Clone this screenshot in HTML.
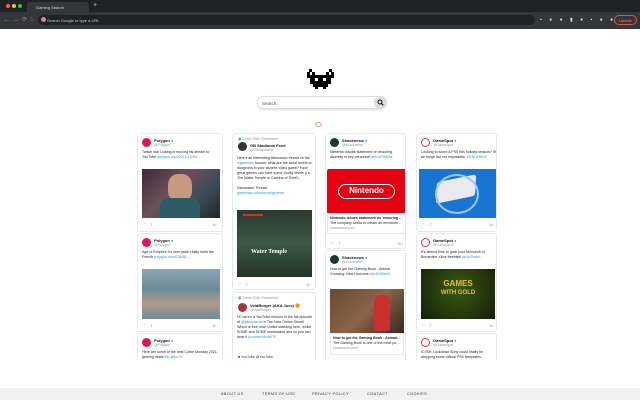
<!DOCTYPE html>
<html><head><meta charset="utf-8"><style>
*{margin:0;padding:0;box-sizing:border-box}
body{width:640px;height:400px;overflow:hidden;background:#fff;font-family:"Liberation Sans",sans-serif;position:relative}
.a{position:absolute}
.card{position:absolute;background:#fff;border:1px solid #e6e9ec;border-radius:3px;overflow:hidden}
.nm{font-size:4px;font-weight:bold;color:#111;white-space:nowrap}
.hd{font-size:3.5px;color:#8899a6;white-space:nowrap}
.tx{font-size:3.6px;color:#222;line-height:5px}
.ln{white-space:nowrap;overflow:hidden;text-overflow:ellipsis}
.lk{color:#1b95e0}
.av{position:absolute;width:9px;height:9px;border-radius:50%}
.act{position:absolute;font-size:4px;color:#8899a6;white-space:nowrap}
</style></head><body>
<!-- chrome -->
<div class="a" style="left:0;top:0;width:640px;height:12px;background:#202124"></div>
<div class="a" style="left:6px;top:4px;width:4px;height:4px;border-radius:50%;background:#ff5f57"></div>
<div class="a" style="left:12px;top:4px;width:4px;height:4px;border-radius:50%;background:#febc2e"></div>
<div class="a" style="left:18px;top:4px;width:4px;height:4px;border-radius:50%;background:#28c840"></div>
<div class="a" style="left:27px;top:2px;width:62px;height:10px;background:#35363a;border-radius:3px 3px 0 0;color:#ddd;font-size:4px;padding:3px 0 0 9px">Gaming Search</div>
<div class="a" style="left:93px;top:2px;color:#ccc;font-size:7px">+</div>
<div class="a" style="left:0;top:12px;width:640px;height:17px;background:#35363a"></div>
<div class="a" style="left:4px;top:16px;color:#999;font-size:6px;letter-spacing:3px;white-space:nowrap">←→⟳⌂</div>
<div class="a" style="left:38px;top:15px;width:497px;height:10px;background:#202124;border-radius:5px;color:#ccc;font-size:4px;padding:3px 0 0 9px">Search Google or type a URL</div>
<div class="a" style="left:41px;top:17px;width:5px;height:5px;border-radius:50%;background:#c8a;"></div>
<div class="a" style="left:540px;top:17px;color:#ddd;font-size:5px;letter-spacing:3px;white-space:nowrap">▪ ● ● ▮ ● ▪ ● ●</div>
<div class="a" style="left:614px;top:15px;width:23px;height:10px;border:1px solid #e05050;border-radius:5px;color:#f08080;font-size:4px;padding:2px 0 0 4px;white-space:nowrap">Update ⋮</div>
<!-- logo -->
<svg class="a" style="left:307px;top:69px" width="27" height="20" viewBox="0 0 27 20"><g fill="#000">
<rect x="2" y="0" width="3" height="3"/><rect x="22" y="0" width="3" height="3"/>
<rect x="0" y="3" width="3" height="6"/><rect x="24" y="3" width="3" height="6"/>
<rect x="5" y="3" width="3" height="3"/><rect x="19" y="3" width="3" height="3"/>
<rect x="3" y="6" width="21" height="9"/><rect x="6" y="15" width="15" height="3"/>
<rect x="8" y="18" width="3" height="2"/><rect x="16" y="18" width="3" height="2"/></g>
<rect x="8" y="9" width="3" height="3" fill="#fff"/><rect x="16" y="9" width="3" height="3" fill="#fff"/></svg>
<!-- search -->
<div class="a" style="left:257px;top:96px;width:129px;height:13px;border:1px solid #ddd;border-radius:7px;box-shadow:0 1px 2px #ddd;font-size:4.5px;color:#555;padding:3.5px 0 0 4px">Search..</div>
<div class="a" style="left:374px;top:96px;width:13px;height:13px;border-radius:50%;background:#ddd"></div>
<svg class="a" style="left:377px;top:99px" width="7" height="7" viewBox="0 0 7 7"><circle cx="3" cy="3" r="2" fill="none" stroke="#111" stroke-width="1"/><path d="M4.4 4.4L6.3 6.3" stroke="#111" stroke-width="1.1"/></svg>
<div class="a" style="left:315px;top:122px;width:7px;height:5px;border:1px solid #f0a080;border-radius:50%"></div>

<!-- col1 -->
<div class="card" style="left:137px;top:133px;width:86px;height:99px">
 <div class="av" style="left:4px;top:4px;background:#e0144f"></div>
 <div class="a nm" style="left:16px;top:4px">Polygon <span style="color:#1da1f2">●</span></div><div class="a hd" style="left:16px;top:9px">@Polygon</div>
 <div class="a tx" style="left:4px;top:16px;width:80px">Twitch star Ludwig is moving his stream to YouTube <span class="lk">polygon.com/2021/11/30/...</span></div>
 <div class="a" style="left:4px;top:35px;width:78px;height:49px;background:linear-gradient(135deg,#402838,#6a5058 40%,#3a4a58 70%,#222)"></div>
 <div class="a" style="left:30px;top:40px;width:24px;height:28px;border-radius:40%;background:#c89880"></div>
 <div class="a" style="left:22px;top:64px;width:40px;height:20px;background:#2e5c64;border-radius:8px 8px 0 0"></div>
 <div class="act" style="left:5px;top:88px">♡ &nbsp; ⇪</div><div class="act" style="left:74px;top:88px">1h</div>
</div>
<div class="card" style="left:137px;top:233px;width:86px;height:99px">
 <div class="av" style="left:4px;top:4px;background:#e0144f"></div>
 <div class="a nm" style="left:16px;top:4px">Polygon <span style="color:#1da1f2">●</span></div><div class="a hd" style="left:16px;top:9px">@Polygon</div>
 <div class="a tx" style="left:4px;top:16px;width:80px">Age of Empires 4's new patch really nerfs the French <span class="lk">polygon.com/22806/...</span></div>
 <div class="a" style="left:4px;top:35px;width:78px;height:50px;background:linear-gradient(180deg,#8aa4b4,#6c8c98 40%,#b09a8a 70%,#708a98)"></div>
 <div class="act" style="left:5px;top:89px">♡ &nbsp; ⇪</div><div class="act" style="left:74px;top:89px">1h</div>
</div>
<div class="card" style="left:137px;top:333px;width:86px;height:30px">
 <div class="av" style="left:4px;top:4px;background:#e0144f"></div>
 <div class="a nm" style="left:16px;top:4px">Polygon <span style="color:#1da1f2">●</span></div><div class="a hd" style="left:16px;top:9px">@Polygon</div>
 <div class="a tx" style="left:4px;top:16px;width:80px">Here are some of the best Cyber Monday 2021 gaming deals <span class="lk">trib.al/bc7x</span></div>
</div>
<!-- col2 -->
<div class="card" style="left:232px;top:133px;width:84px;height:157px">
 <div class="a hd" style="left:5px;top:3px"><span style="color:#2a5">▣</span> Quest Sixth Retweeted</div>
 <div class="av" style="left:5px;top:8px;background:#333"></div>
 <div class="a nm" style="left:17px;top:9px">GB Stadiums Feed</div><div class="a hd" style="left:17px;top:14px">@GBStadiums</div>
 <div class="a tx" style="left:4px;top:22px;width:78px">Here's an interesting discussion thread on the <span class="lk">r/gamedev</span> forums: what are the worst levels or dungeons in your favorite video game? Fave great games can have some clunky levels (i.e. The Water Temple in Ocarina of Time!)<br><br>Discussion Thread: <span class="lk">gamefaqs.com/forum/general</span></div>
 <div class="a" style="left:4px;top:76px;width:75px;height:67px;background:linear-gradient(180deg,#2a3a30,#3c5844 50%,#243428)"></div>
 <div class="a" style="left:10px;top:80px;width:20px;height:2px;background:#c33"></div>
 <div class="a" style="left:18px;top:115px;color:#fff;font-family:'Liberation Serif',serif;font-size:6px;font-weight:bold;white-space:nowrap">Water Temple</div>
 <div class="act" style="left:5px;top:148px">♡ &nbsp; ⇪</div><div class="act" style="left:73px;top:148px">1h</div>
</div>
<div class="card" style="left:232px;top:292px;width:84px;height:70px">
 <div class="a hd" style="left:5px;top:3px"><span style="color:#2a5">▣</span> Quest Sixth Retweeted</div>
 <div class="av" style="left:5px;top:10px;background:#a33"></div>
 <div class="a nm" style="left:17px;top:10px">VoidBurger (AKA Joes) 🟠</div><div class="a hd" style="left:17px;top:15px">@VoidBurger</div>
 <div class="a tx" style="left:4px;top:22px;width:78px">Hi, here's a YouTube version of the full episode of <span class="lk">@gamebench</span>'s The New Online Street! Which is free now! Unlike standing here, which SOME and SOME oneheaded and so you can hear it <span class="lk">youtube/cb/dWTF</span></div>
 <div class="a hd" style="left:5px;top:62px;color:#333"><span style="color:#e00">■</span> YouTube @YouTube</div>
</div>
<!-- col3 -->
<div class="card" style="left:325px;top:133px;width:81px;height:116px">
 <div class="av" style="left:4px;top:4px;background:#1a3a2a"></div>
 <div class="a nm" style="left:16px;top:4px">Shacknews <span style="color:#1da1f2">●</span></div><div class="a hd" style="left:16px;top:9px">@shacknews</div>
 <div class="a tx" style="left:4px;top:16px;width:76px">Nintendo issues statement on ensuring diversity in key personnel <span class="lk">shk.tl/3I5KBe</span></div>
 <div class="a" style="left:1px;top:35px;width:79px;height:44px;background:#e60012;border-radius:2px 2px 0 0"></div>
 <div class="a" style="left:12px;top:50px;width:57px;height:15px;border:1.5px solid #fff;border-radius:8px;color:#fff;font-weight:bold;font-size:8px;text-align:center;line-height:12px">Nintendo</div>
 <div class="a" style="left:1px;top:79px;width:79px;height:21px;border:1px solid #e6e9ec;padding:2px"><div class="tx ln" style="font-weight:bold;line-height:5px">Nintendo issues statement on 'ensuring di...</div><div class="tx ln" style="line-height:5px">The company seeks to create an environm...</div><div class="hd">shacknews.com</div></div>
 <div class="act" style="left:5px;top:107px">♡ &nbsp; ⇪</div><div class="act" style="left:72px;top:107px">3h</div>
</div>
<div class="card" style="left:325px;top:250px;width:81px;height:112px">
 <div class="av" style="left:4px;top:4px;background:#1a3a2a"></div>
 <div class="a nm" style="left:16px;top:4px">Shacknews <span style="color:#1da1f2">●</span></div><div class="a hd" style="left:16px;top:9px">@shacknews</div>
 <div class="a tx" style="left:4px;top:16px;width:76px">How to get the Gaming Book - Animal Crossing: New Horizons <span class="lk">shk.tl/3I5hK0</span></div>
 <div class="a" style="left:4px;top:38px;width:74px;height:44px;background:linear-gradient(135deg,#6a4838,#8a6448 50%,#3a2820)"></div>
 <div class="a" style="left:48px;top:44px;width:16px;height:36px;background:#c83030;border-radius:6px 6px 2px 2px"></div>
 <div class="a" style="left:4px;top:82px;width:74px;height:22px;border:1px solid #e6e9ec;padding:2px"><div class="tx ln" style="font-weight:bold;line-height:5px">How to get the Gaming Book - Animal Cro...</div><div class="tx ln" style="line-height:5px">The Gaming Book is one of the most popular ...</div><div class="hd">shacknews.com</div></div>
</div>
<!-- col4 -->
<div class="card" style="left:416px;top:133px;width:81px;height:99px">
 <div class="av" style="left:4px;top:4px;background:#fff;border:1.5px solid #e03030"></div>
 <div class="a nm" style="left:16px;top:4px">GameSpot <span style="color:#1da1f2">●</span></div><div class="a hd" style="left:16px;top:9px">@GameSpot</div>
 <div class="a tx" style="left:4px;top:16px;width:76px">Looking to score a PS5 this holiday season? It'll be tough but not impossible. <span class="lk">bit.ly/3I5hDC</span></div>
 <div class="a" style="left:2px;top:35px;width:77px;height:49px;background:#1876d2"></div>
 <div class="a" style="left:20px;top:44px;width:38px;height:22px;background:#e8eaf0;transform:skew(-15deg) rotate(-12deg);border-radius:3px"></div>
 <div class="a" style="left:18px;top:40px;width:44px;height:40px;border:2px solid #9cc8f0;border-radius:50%"></div>
 <div class="act" style="left:5px;top:88px">♡ &nbsp; ⇪</div><div class="act" style="left:72px;top:88px">1h</div>
</div>
<div class="card" style="left:416px;top:233px;width:81px;height:99px">
 <div class="av" style="left:4px;top:4px;background:#fff;border:1.5px solid #e03030"></div>
 <div class="a nm" style="left:16px;top:4px">GameSpot <span style="color:#1da1f2">●</span></div><div class="a hd" style="left:16px;top:9px">@GameSpot</div>
 <div class="a tx" style="left:4px;top:16px;width:76px">It's almost time to grab your Microsoft of Borderline Xbox freebies! <span class="lk">bit.ly/3ncku</span></div>
 <div class="a" style="left:4px;top:35px;width:74px;height:50px;background:radial-gradient(circle at 50% 40%,#3a5a10,#142008);color:#e8c030;text-align:center;font-weight:bold;font-size:8px;line-height:8px;padding-top:11px">GAMES<br><span style="font-size:6px">WITH GOLD</span></div>
 <div class="act" style="left:5px;top:89px">♡ &nbsp; ⇪</div><div class="act" style="left:72px;top:89px">1h</div>
</div>
<div class="card" style="left:416px;top:333px;width:81px;height:30px">
 <div class="av" style="left:4px;top:4px;background:#fff;border:1.5px solid #e03030"></div>
 <div class="a nm" style="left:16px;top:4px">GameSpot <span style="color:#1da1f2">●</span></div><div class="a hd" style="left:16px;top:9px">@GameSpot</div>
 <div class="a tx" style="left:4px;top:16px;width:76px">ICYMI: Lockdown Sony could finally be dropping some official PS5 faceplates <span class="lk">bit.ly/3ncF</span></div>
</div>
<div class="a" style="left:0;top:360px;width:640px;height:28px;background:#fff"></div>
<!-- footer -->
<div class="a" style="left:0;top:388px;width:640px;height:12px;background:#f1f1f1;font-size:3.8px;color:#333;letter-spacing:0.4px;white-space:nowrap"><span class="a" style="left:221px;top:4px">ABOUT US</span><span class="a" style="left:262px;top:4px">TERMS OF USE</span><span class="a" style="left:312px;top:4px">PRIVACY POLICY</span><span class="a" style="left:367px;top:4px">CONTACT</span><span class="a" style="left:407px;top:4px">COOKIES</span></div>
</body></html>
